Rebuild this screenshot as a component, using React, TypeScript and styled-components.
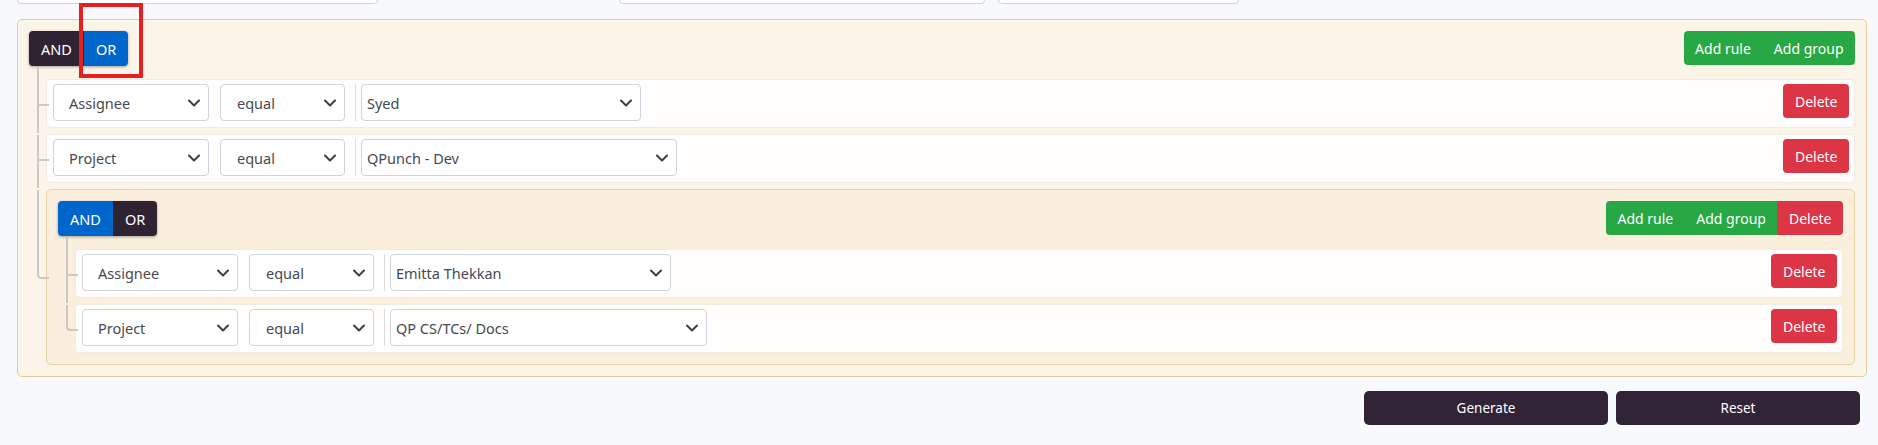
import React from 'react';
import styled, { createGlobalStyle } from 'styled-components';

const GlobalStyle = createGlobalStyle`
    html, body {
        margin: 0;
        padding: 0;
        background: #f8f9fd;
        overflow: hidden;
    }
    body {
        font-family: "Noto Sans", "Open Sans", Arial, sans-serif;
        color: #444a51;
    }
    * { box-sizing: border-box; }
    button { font-family: inherit; cursor: pointer; }
`;

const Page = styled.div`
    margin-top: -34px;
    padding: 0 11px 0 17px;
`;

// filter inputs above the builder, scrolled mostly out of view
const FilterRow = styled.div`
    display: flex;
    height: 38px;
    margin-bottom: 15px;
`;

const FilterBox = styled.div<{ $width: number; $offset?: number }>`
    width: ${p => p.$width}px;
    margin-left: ${p => p.$offset ?? 0}px;
    height: 38px;
    background: #fff;
    border: 1px solid #ced4da;
    border-radius: 4px;
`;

const Group = styled.div<{ $nested?: boolean }>`
    position: relative;
    padding: 11px;
    background: ${p => (p.$nested ? '#f9efdc' : '#fbf4e9')};
    border: 1px solid ${p => (p.$nested ? '#e6d2a5' : '#e3cc9b')};
    border-radius: 5px;
`;

const GroupHeader = styled.div`
    position: relative;
    display: flex;
    justify-content: space-between;
    align-items: flex-start;
    margin-bottom: 13px;
`;

// red annotation box drawn over the OR toggle
const Highlight = styled.div`
    position: absolute;
    left: 50px;
    top: -28px;
    width: 64px;
    height: 75px;
    border: 4px solid #e5201f;
    pointer-events: none;
`;

const Combinator = styled.div`
    display: flex;
    border-radius: 4px;
    overflow: hidden;
    box-shadow: 0 1px 3px rgba(0, 0, 0, 0.35);
`;

const CombinatorButton = styled.button<{ $active: boolean }>`
    height: 35px;
    padding: 0 12px;
    border: 0;
    font-size: 14.5px;
    color: #fff;
    background: ${p => (p.$active ? '#0066cc' : '#2f2333')};
`;

const ActionGroup = styled.div`
    display: flex;
    border-radius: 4px;
    overflow: hidden;
`;

const ActionButton = styled.button<{ $tone: 'add' | 'danger' }>`
    height: 34px;
    padding: 0 11.5px;
    border: 0;
    font-size: 14px;
    color: #fff;
    background: ${p => (p.$tone === 'add' ? '#28a745' : '#dc3545')};
`;

const DeleteButton = styled(ActionButton)`
    margin-left: auto;
    border-radius: 4px;
`;

const Body = styled.div`
    display: flex;
    flex-direction: column;
    gap: 6px;
    margin-left: 17px;

    & > * { position: relative; }

    & > *::before {
        content: '';
        position: absolute;
        left: -10px;
        top: 0;
        width: 10px;
        height: 50%;
        border-left: 2px solid #c9c9c9;
        border-bottom: 2px solid #c9c9c9;
    }
    & > *:first-child::before {
        top: -13px;
        height: calc(50% + 13px);
    }
    & > *:last-child::before {
        border-bottom-left-radius: 4px;
    }
    & > *:not(:last-child)::after {
        content: '';
        position: absolute;
        left: -10px;
        top: 50%;
        bottom: -6px;
        border-left: 2px solid #c9c9c9;
    }
`;

const Rule = styled.div`
    display: flex;
    align-items: flex-start;
    padding: 4px 5px 6px 6px;
    background: #fffefc;
    border: 1px solid #f0ebe3;
    border-radius: 4px;
`;

const Select = styled.div<{ $width: number; $inset: number }>`
    display: flex;
    align-items: center;
    justify-content: space-between;
    width: ${p => p.$width}px;
    height: 37px;
    margin-right: 11px;
    padding: 0 8px 0 ${p => p.$inset}px;
    background: #fff;
    border: 1px solid #ced4da;
    border-radius: 4px;
    font-size: 14.5px;
    color: #454a50;
    white-space: nowrap;
`;

const ValueSelect = styled(Select)`
    margin-right: 0;
`;

const Separator = styled.div`
    width: 1px;
    height: 37px;
    margin: 0 5px 0 -1px;
    background: #dcdcdc;
`;

const Footer = styled.div`
    display: flex;
    justify-content: flex-end;
    gap: 8px;
    margin-top: 14px;
    padding-right: 7px;
`;

const FooterButton = styled.button`
    width: 244px;
    height: 34px;
    border: 0;
    border-radius: 5px;
    font-size: 13.5px;
    color: #fff;
    background: #312437;
`;

function Chevron() {
    return (
        <svg width="12" height="8" viewBox="0 0 12 8">
            <path d="M1 1.5l5 5 5-5" fill="none" stroke="#3a3f44" strokeWidth="2" strokeLinecap="round" strokeLinejoin="round" />
        </svg>
    );
}

type RuleData = { field: string; fieldWidth: number; value: string; valueWidth: number };

function RuleRow({ rule }: { rule: RuleData }) {
    return (
        <Rule>
            <Select $width={rule.fieldWidth} $inset={15}>
                {rule.field}
                <Chevron />
            </Select>
            <Select $width={125} $inset={16}>
                equal
                <Chevron />
            </Select>
            <Separator />
            <ValueSelect $width={rule.valueWidth} $inset={5}>
                {rule.value}
                <Chevron />
            </ValueSelect>
            <DeleteButton $tone='danger'>Delete</DeleteButton>
        </Rule>
    );
}

function Header({ combinator, removable, marked }: { combinator: 'AND' | 'OR'; removable?: boolean; marked?: boolean }) {
    return (
        <GroupHeader>
            <Combinator>
                <CombinatorButton $active={combinator === 'AND'}>AND</CombinatorButton>
                <CombinatorButton $active={combinator === 'OR'}>OR</CombinatorButton>
            </Combinator>
            {marked && <Highlight />}
            <ActionGroup>
                <ActionButton $tone='add'>Add rule</ActionButton>
                <ActionButton $tone='add'>Add group</ActionButton>
                {removable && <ActionButton $tone='danger'>Delete</ActionButton>}
            </ActionGroup>
        </GroupHeader>
    );
}

const outerRules: RuleData[] = [
    { field: 'Assignee', fieldWidth: 156, value: 'Syed', valueWidth: 280 },
    { field: 'Project', fieldWidth: 156, value: 'QPunch - Dev', valueWidth: 316 },
];

const innerRules: RuleData[] = [
    { field: 'Assignee', fieldWidth: 156, value: 'Emitta Thekkan', valueWidth: 281 },
    { field: 'Project', fieldWidth: 156, value: 'QP CS/TCs/ Docs', valueWidth: 317 },
];

export default function App() {
    return (
        <React.Fragment>
            <GlobalStyle />
            <Page>
                <FilterRow>
                    <FilterBox $width={361} />
                    <FilterBox $width={366} $offset={241} />
                    <FilterBox $width={241} $offset={13} />
                </FilterRow>

                <Group>
                    <Header combinator='OR' marked />
                    <Body>
                        {outerRules.map(r => <RuleRow key={r.value} rule={r} />)}
                        <Group $nested>
                            <Header combinator='AND' removable />
                            <Body>
                                {innerRules.map(r => <RuleRow key={r.value} rule={r} />)}
                            </Body>
                        </Group>
                    </Body>
                </Group>

                <Footer>
                    <FooterButton>Generate</FooterButton>
                    <FooterButton>Reset</FooterButton>
                </Footer>
            </Page>
        </React.Fragment>
    );
}
